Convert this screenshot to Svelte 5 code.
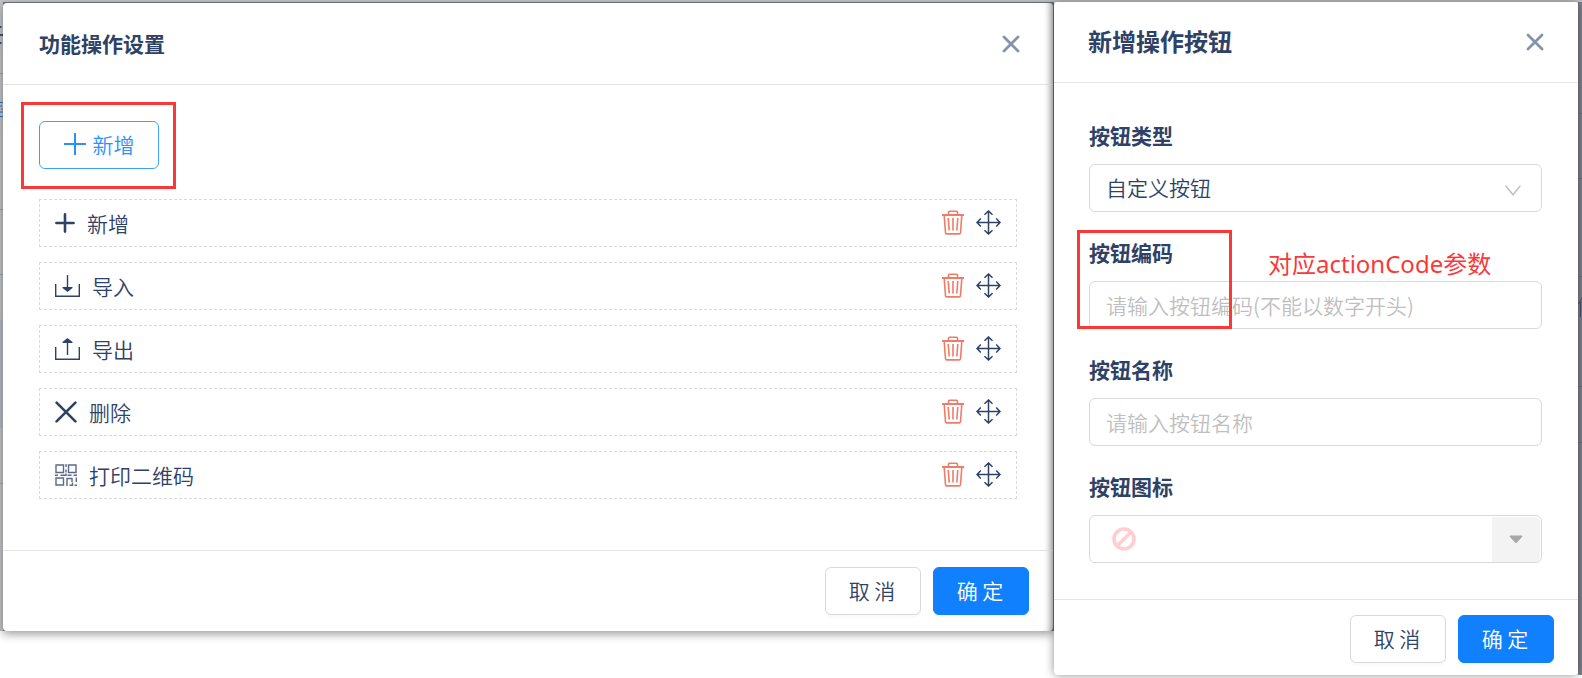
<script>
  let rows = [
    { icon: 'plus', label: '新增' },
    { icon: 'import', label: '导入' },
    { icon: 'export', label: '导出' },
    { icon: 'cross', label: '删除' },
    { icon: 'qr', label: '打印二维码' },
  ];
</script>

{#snippet closeIcon()}
  <svg width="18" height="18" viewBox="0 0 18 18" fill="none" stroke="#8492ab" stroke-width="2.8" stroke-linecap="round" aria-hidden="true">
    <path d="M2 2L16 16M16 2L2 16" />
  </svg>
{/snippet}

{#snippet rowIcon(name)}
  {#if name === 'plus'}
    <svg width="20" height="20" viewBox="0 0 20 20" fill="none" stroke="currentColor" stroke-width="2.6" stroke-linecap="round" aria-hidden="true">
      <path d="M10 1.4V18.6M1.4 10H18.6" />
    </svg>
  {:else if name === 'import'}
    <svg width="25" height="22" viewBox="0 0 25 22" aria-hidden="true">
      <path d="M.7 9V21.3H24.3V9M12.5 0V14" fill="none" stroke="currentColor" stroke-width="1.4" />
      <path d="M7.5 12H17.5V13L12.5 17L7.5 13Z" fill="currentColor" />
    </svg>
  {:else if name === 'export'}
    <svg width="25" height="22" viewBox="0 0 25 22" aria-hidden="true">
      <path d="M.7 9V21.3H24.3V9M12.5 3V17" fill="none" stroke="currentColor" stroke-width="1.4" />
      <path d="M7.5 5H17.5V4L12.5 0L7.5 4Z" fill="currentColor" />
    </svg>
  {:else if name === 'cross'}
    <svg width="22" height="22" viewBox="0 0 22 22" fill="none" stroke="currentColor" stroke-width="2.6" stroke-linecap="round" aria-hidden="true">
      <path d="M1.6 1.6L20.4 20.4M20.4 1.6L1.6 20.4" />
    </svg>
  {:else}
    <svg width="22" height="22" viewBox="0 0 22 22" fill="none" stroke="#5b6a87" stroke-width="1.4" aria-hidden="true">
      <path d="M1 1H8.500V8.500H1ZM13.500 1H21V8.500H13.500ZM1 14H8.500V21H1Z" />
      <path d="M11 0V3M11 5.500V8.500M0 11.300H3M5.500 11.300H11V9.500M12.500 11.300H16.500M18.500 11.300H22M12 22V14.500H17V18M21.300 13.500V18M14.500 21.300H17.500V18.500M19.500 21.300H22" />
    </svg>
  {/if}
{/snippet}

<main class="page">
  <div class="backdrop" aria-hidden="true">
    <svg class="edge" width="3" height="631" viewBox="0 0 3 631">
      <path fill="#c3c5c8" d="M0 0H3V631H0Z" />
      <path fill="#b7bcc4" d="M0 320H3V428H0Z" />
      <path stroke="#465574" stroke-width="2" d="M0 27H1.5M0 35H3M0 43H1.5" />
      <path stroke="#2878dd" stroke-width="1" d="M0 102.500H3M0 106H2M1 109H3M0 112H3M0 116.500H3" />
      <path stroke="#a4abb5" d="M0 73.500H3M0 209.500H3M0 274.500H3M0 483.500H3" />
    </svg>
    <svg class="side" width="4" height="673" viewBox="0 0 4 673">
      <path fill="#7d838d" d="M0 0H4V673H0Z" />
      <path stroke="#6b7484" d="M0 111.500H4M0 176.500H4M0 274.500H4M0 384.500H4M0 440.500H4" />
      <path stroke="#454f72" fill="none" d="M4 296L.5 302M2.500 300V315" />
    </svg>
  </div>

  <div class="left-cell">
    <section class="dialog" aria-labelledby="actions-title">
      <header class="head">
        <h2 id="actions-title">功能操作设置</h2>
        <button class="close" aria-label="关闭">{@render closeIcon()}</button>
      </header>
      <div class="body">
        <div class="add-wrap">
          <button class="add">
            <svg width="22" height="22" viewBox="0 0 22 22" fill="none" stroke="currentColor" stroke-width="2" aria-hidden="true">
              <path d="M11 0V22M0 11H22" />
            </svg>
            <span>新增</span>
          </button>
          <div class="mark mark-add"></div>
        </div>
        <ul class="rows">
          {#each rows as row}
            <li class="row">
              {@render rowIcon(row.icon)}
              <span class="name">{row.label}</span>
              <button class="tool trash" aria-label="移除">
                <svg width="22" height="25" viewBox="0 0 22 25" fill="none" stroke="currentColor" stroke-width="1.600" aria-hidden="true">
                  <path d="M0 5H22" stroke-width="2" />
                  <path d="M6.500 4.500V2.300Q6.500 1.200 7.600 1.200H14.400Q15.500 1.200 15.500 2.300V4.500M2.200 5.500L3.500 22.800Q3.600 23.900 4.700 23.900H17.300Q18.400 23.900 18.500 22.800L19.800 5.500M11 8V20.500M6.200 8L7.200 20.500M15.800 8L14.800 20.500" />
                </svg>
              </button>
              <button class="tool" aria-label="拖动">
                <svg width="25" height="25" viewBox="0 0 25 25" fill="none" stroke="currentColor" stroke-width="1.500" aria-hidden="true">
                  <path d="M12.500 1V24M1 12.500H24M8.500 4.800L12.500 1L16.500 4.800M8.500 20.200L12.500 24L16.500 20.200M4.800 8.500L1 12.500L4.800 16.500M20.200 8.500L24 12.500L20.200 16.500" />
                </svg>
              </button>
            </li>
          {/each}
        </ul>
      </div>
      <footer class="foot">
        <button class="btn">取 消</button>
        <button class="btn primary">确 定</button>
      </footer>
    </section>
  </div>

  <section class="dialog side-dialog" aria-labelledby="new-title">
    <header class="head">
      <h2 id="new-title">新增操作按钮</h2>
      <button class="close" aria-label="关闭">{@render closeIcon()}</button>
    </header>
    <form class="form">
      <div class="field">
        <label for="kind">按钮类型</label>
        <div class="control">
          <select id="kind"><option>自定义按钮</option></select>
          <svg class="chevron" width="16" height="11" viewBox="0 0 16 11" fill="none" stroke="#bfbfbf" stroke-width="1.500" aria-hidden="true">
            <path d="M.6 .6L8 9.800L15.400 .6" />
          </svg>
        </div>
      </div>
      <div class="field">
        <label for="code">按钮编码</label>
        <input id="code" type="text" placeholder="请输入按钮编码(不能以数字开头)" />
        <div class="mark mark-code"></div>
        <span class="note">对应actionCode参数</span>
      </div>
      <div class="field">
        <label for="name">按钮名称</label>
        <input id="name" type="text" placeholder="请输入按钮名称" />
      </div>
      <div class="field">
        <label for="icon">按钮图标</label>
        <button id="icon" class="picker" type="button">
          <svg width="24" height="24" viewBox="0 0 24 24" fill="none" stroke="#ffcfcf" stroke-width="3.600" aria-hidden="true">
            <circle cx="12" cy="12" r="10" />
            <path d="M5.200 18.800L18.800 5.200" />
          </svg>
          <span class="caret">
            <svg width="14" height="9" viewBox="0 0 14 9" aria-hidden="true">
              <path d="M1.500 .5H12.500Q14 .8 13 2L8 7.500Q7 8.500 6 7.500L1 2Q0 .8 1.500 .5Z" fill="#a8a8a8" />
            </svg>
          </span>
        </button>
      </div>
    </form>
    <footer class="foot">
      <button class="btn">取 消</button>
      <button class="btn primary">确 定</button>
    </footer>
  </section>
</main>

<style>
  :global(body) {
    background: #fff;
  }

  .page,
  .page * {
    box-sizing: border-box;
  }

  .page {
    position: relative;
    display: grid;
    grid-template-columns: 1050fr 524fr;
    column-gap: 1px;
    align-items: start;
    padding: 2px 4px 3px 3px;
    overflow: hidden;
    color: #2f4266;
    font-family: "Noto Sans CJK SC", sans-serif;
    font-size: 21px;
    font-weight: 350;
    line-height: 24px;
  }

  button,
  input,
  select {
    font: inherit;
    color: inherit;
    margin: 0;
  }

  button {
    padding: 0;
    border: 0;
    background: none;
    cursor: pointer;
  }

  svg {
    display: block;
    flex: none;
  }

  .backdrop {
    position: absolute;
    inset: 0;
    border-top: 2px solid #c3c5c6;
  }

  .edge {
    position: absolute;
    left: 0;
    top: -2px;
  }

  .side {
    position: absolute;
    top: 0;
    right: 0;
  }

  .left-cell {
    position: relative;
    margin-right: -1px;
    padding: 1px 1px 0 0;
    background: #686c72;
    box-shadow: 0 3px 9px rgba(0, 0, 0, 0.4);
  }

  .dialog {
    position: relative;
    background: #fff;
    border-radius: 4px;
  }

  .left-cell .dialog {
    box-shadow: inset -9px 0 8px -8px rgba(0, 0, 0, 0.35);
  }

  .side-dialog {
    box-shadow: 0 0 10px rgba(0, 0, 0, 0.45);
  }

  .head {
    display: flex;
    align-items: center;
    justify-content: space-between;
    height: 82px;
    padding: 0 33px 0 36px;
    border-bottom: 1px solid #e4e4e6;
  }

  h2 {
    margin: 0;
    padding-bottom: 2px;
    font-size: 21px;
    font-weight: 700;
    line-height: 32px;
  }

  .side-dialog .head {
    height: 81px;
    padding: 0 34px;
  }

  .side-dialog h2 {
    font-size: 24px;
  }

  .body {
    padding: 36px 36px 51px;
  }

  .add-wrap {
    position: relative;
    width: 120px;
    margin-bottom: 30px;
  }

  .add {
    display: flex;
    align-items: center;
    justify-content: center;
    gap: 7px;
    width: 100%;
    height: 48px;
    padding-bottom: 2px;
    border: 1px solid #409eff;
    border-radius: 6px;
    color: #2b8fff;
    background: #fff;
  }

  .mark {
    position: absolute;
    border: 3px solid #fb3838;
    pointer-events: none;
  }

  .mark-add {
    inset: -19px -17px -20px -18px;
  }

  .rows {
    display: grid;
    gap: 15px;
    margin: 0;
    padding: 0;
    list-style: none;
  }

  .row {
    display: flex;
    align-items: center;
    height: 48px;
    padding: 0 15px;
    border: 1px dashed #d9d9d9;
  }

  .name {
    flex: 1;
    padding-left: 12px;
  }

  .tool {
    margin-left: 12px;
    padding-bottom: 2px;
  }

  .trash {
    color: #ee7c68;
  }

  .foot {
    display: flex;
    justify-content: flex-end;
    gap: 12px;
    padding: 16px 24px;
    border-top: 1px solid #e4e4e6;
  }

  .side-dialog .foot {
    padding: 15px 24px 12px;
  }

  .btn {
    width: 96px;
    height: 48px;
    padding: 0 2px 2px 0;
    border: 1px solid #d9d9d9;
    border-radius: 6px;
    background: #fff;
    box-shadow: 0 3px 0 rgba(0, 0, 0, 0.02);
  }

  .primary {
    border-color: #1180ff;
    background: #1180ff;
    color: #fff;
  }

  .form {
    display: grid;
    gap: 28px;
    padding: 40px 36px 36px 35px;
  }

  .field {
    position: relative;
    display: grid;
    gap: 17px;
  }

  label {
    font-weight: 700;
  }

  .control {
    position: relative;
    display: grid;
  }

  input,
  select,
  .picker {
    width: 100%;
    height: 48px;
    padding: 0 16px;
    border: 1px solid #d9d9d9;
    border-radius: 6px;
    background: #fff;
    outline: 0;
  }

  select {
    padding-bottom: 2px;
    appearance: none;
  }

  input::placeholder {
    color: #bfbfbf;
    opacity: 1;
  }

  .chevron {
    position: absolute;
    right: 21px;
    top: 21px;
    pointer-events: none;
  }

  .mark-code {
    top: -10px;
    left: -12px;
    width: 155px;
    height: 99px;
  }

  .note {
    position: absolute;
    top: 12px;
    left: 179px;
    color: #fb3838;
    font-family: "Noto Sans", "Noto Sans CJK SC", sans-serif;
    font-size: 24px;
    font-weight: 400;
    white-space: nowrap;
  }

  .picker {
    display: flex;
    align-items: center;
    justify-content: space-between;
    padding: 0 1px 0 22px;
  }

  .caret {
    display: grid;
    place-items: center;
    width: 48px;
    height: 45px;
    border-radius: 0 5px 5px 0;
    background: #f3f3f3;
  }
</style>
